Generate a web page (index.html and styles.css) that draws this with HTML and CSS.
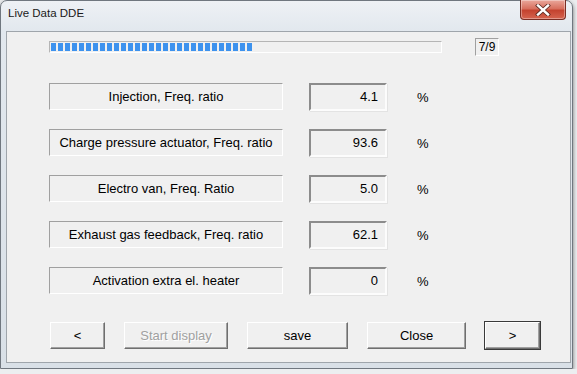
FILE: index.html
```html
<!DOCTYPE html>
<html lang="en">
<head>
    <meta charset="UTF-8">
    <title>Live Data DDE</title>
    <link rel="stylesheet" href="styles.css">
</head>
<body>
    <div class="window">
        <div class="titlebar">
            <span class="title">Live Data DDE</span>
            <div class="close-btn">
                <svg width="16" height="12" viewBox="0 0 16 12">
                    <path d="M3 1.5 L13 10.5 M13 1.5 L3 10.5" stroke="#5a2a22" stroke-width="4" stroke-linecap="square"/>
                    <path d="M3 1.5 L13 10.5 M13 1.5 L3 10.5" stroke="#ffffff" stroke-width="2.4" stroke-linecap="square"/>
                </svg>
            </div>
        </div>

        <div class="client">
            <div class="progress-row">
                <div class="progress"><div class="progress-fill"></div></div>
                <div class="counter">7/9</div>
            </div>

            <div class="rows">
                <div class="row">
                    <div class="label">Injection, Freq. ratio</div>
                    <div class="value">4.1</div>
                    <div class="unit">%</div>
                </div>
                <div class="row">
                    <div class="label">Charge pressure actuator, Freq. ratio</div>
                    <div class="value">93.6</div>
                    <div class="unit">%</div>
                </div>
                <div class="row">
                    <div class="label">Electro van, Freq. Ratio</div>
                    <div class="value">5.0</div>
                    <div class="unit">%</div>
                </div>
                <div class="row">
                    <div class="label">Exhaust gas feedback, Freq. ratio</div>
                    <div class="value">62.1</div>
                    <div class="unit">%</div>
                </div>
                <div class="row">
                    <div class="label">Activation extra el. heater</div>
                    <div class="value">0</div>
                    <div class="unit">%</div>
                </div>
            </div>

            <div class="buttons">
                <button class="btn btn-small">&lt;</button>
                <button class="btn btn-start" disabled>Start display</button>
                <button class="btn btn-save">save</button>
                <button class="btn btn-close">Close</button>
                <button class="btn btn-small btn-default">&gt;</button>
            </div>
        </div>
    </div>
</body>
</html>
```

FILE: styles.css
```css
/* Dialog styles */
body {
    margin: 0;
    padding: 0;
    background-color: #eceef0;
    font-family: "Liberation Sans", Arial, sans-serif;
    font-size: 13px;
    color: #000;
}
.window {
    width: 573px;
    height: 369px;
    box-sizing: border-box;
    border: 1px solid #70777f;
    border-radius: 7px 7px 0 0;
    background: linear-gradient(to bottom, #eef1f5 0px, #e2e8ee 30px, #d9e0e7 100%);
    box-shadow: 0 2px 4px rgba(0, 0, 0, 0.55);
}
.titlebar {
    height: 30px;
    display: flex;
    align-items: flex-start;
}
.title {
    font-size: 11.5px;
    margin: 6px 0 0 7px;
    color: #1a1a1a;
}
.close-btn {
    margin-left: auto;
    margin-right: 6px;
    margin-top: -1px;
    width: 46px;
    height: 20px;
    box-sizing: border-box;
    border: 1px solid #7a2e24;
    border-top: none;
    border-radius: 0 0 4px 4px;
    background: linear-gradient(to bottom, #eaa89c 0%, #d8705f 45%, #c4432f 55%, #d5644f 100%);
    box-shadow: inset 0 0 0 1px rgba(255, 255, 255, 0.35);
    display: flex;
    align-items: center;
    justify-content: center;
}
.client {
    margin-left: 5px;
    width: 565px;
    height: 332px;
    box-sizing: border-box;
    border: 1px solid #9fa5ab;
    background-color: #f0f0f0;
}
.progress-row {
    display: flex;
    align-items: center;
    height: 18px;
    padding: 6px 0 0 42px;
}
.progress {
    width: 393px;
    height: 12px;
    box-sizing: border-box;
    border: 1px solid;
    border-color: #b5b5b5 #ffffff #ffffff #b5b5b5;
    padding: 1px;
}
.progress-fill {
    width: 203px;
    height: 8px;
    background: repeating-linear-gradient(to right, #3d92ee 0, #3d92ee 5px, transparent 5px, transparent 7px);
}
.counter {
    margin-left: 33px;
    width: 24px;
    height: 18px;
    box-sizing: border-box;
    border: 1px solid;
    border-color: #a0a0a0 #ffffff #ffffff #a0a0a0;
    font-size: 12px;
    line-height: 16px;
    text-align: center;
}
.rows {
    display: flex;
    flex-direction: column;
    gap: 18px;
    margin-top: 27px;
}
.row {
    display: flex;
    align-items: flex-start;
    height: 28px;
}
.label {
    margin-left: 42px;
    width: 234px;
    height: 27px;
    box-sizing: border-box;
    border: 1px solid;
    border-color: #a0a0a0 #ffffff #ffffff #a0a0a0;
    line-height: 25px;
    text-align: center;
    white-space: nowrap;
}
.value {
    margin-left: 26px;
    width: 78px;
    height: 28px;
    box-sizing: border-box;
    border: 2px solid;
    border-color: #8c8c8c #fcfcfc #fcfcfc #8c8c8c;
    box-shadow: 1px 1px 0 #e3e3e3;
    line-height: 24px;
    text-align: right;
    padding-right: 7px;
}
.unit {
    margin-left: 30px;
    line-height: 30px;
}
.buttons {
    display: flex;
    gap: 19px;
    margin-top: 27px;
    padding-left: 43px;
}
.btn {
    height: 27px;
    box-sizing: border-box;
    padding: 0;
    font-family: "Liberation Sans", Arial, sans-serif;
    font-size: 13px;
    color: #000;
    background-color: #f0f0f0;
    border: 1px solid;
    border-color: #ffffff #6f6f6f #6f6f6f #ffffff;
    box-shadow: inset -1px -1px 0 #a0a0a0;
}
.btn-small {
    width: 55px;
}
.btn-start {
    width: 104px;
}
.btn-save {
    width: 101px;
}
.btn-close {
    width: 99px;
}
.btn[disabled] {
    color: #a0a0a0;
    text-shadow: 1px 1px 0 #ffffff;
}
.btn-default {
    outline: 1px solid #3a3a3a;
}
```
